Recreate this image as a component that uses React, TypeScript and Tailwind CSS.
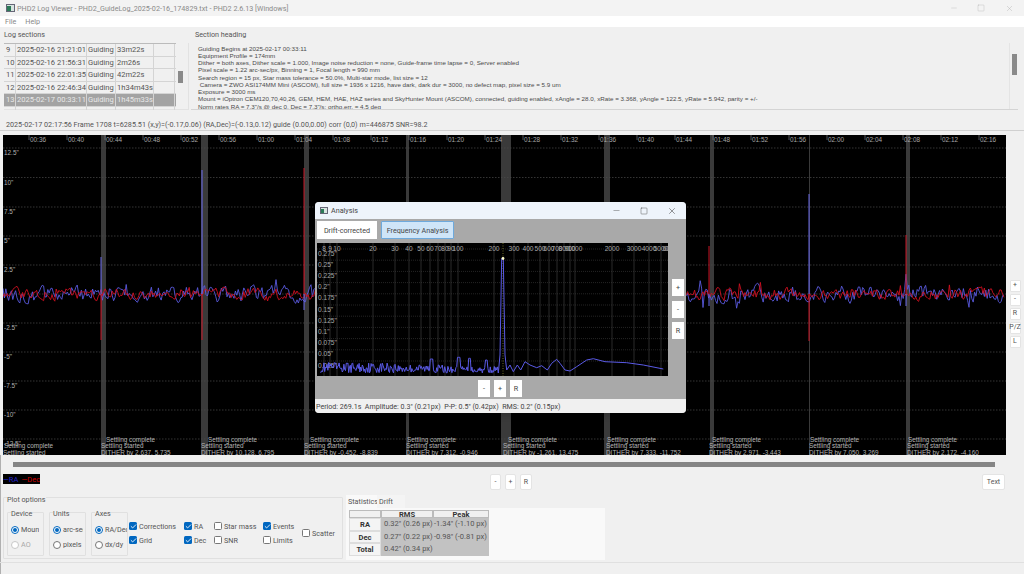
import React from "react";
import { Minus, Square, X, Check } from "lucide-react";

function rng(seed: number) {
  let s = seed;
  return () => {
    s = (s * 16807) % 2147483647;
    return (s - 1) / 2147483646;
  };
}

const X0 = 3, X1 = 1005, Y0 = 294;
type Spike = { x: number; blue?: number; red?: number };
const spikes: Spike[] = [
  { x: 101, blue: 257, red: 340 },
  { x: 202, blue: 170, red: 340 },
  { x: 304, red: 168, blue: 310 },
  { x: 406, blue: 220, red: 325 },
  { x: 503, red: 235, blue: 330 },
  { x: 606, blue: 245, red: 335 },
  { x: 709, red: 246, blue: 306 },
  { x: 809, blue: 194, red: 341 },
  { x: 906, red: 235, blue: 306 },
];

function series(seed: number, amp: number) {
  const r = rng(seed);
  let d = "";
  let prev = 0;
  for (let x = X0; x <= X1; x += 1.4) {
    prev = prev * 0.4 + (r() - 0.5) * amp;
    const y = Y0 + prev + (r() > 0.95 ? (r() - 0.6) * amp * 1.8 : 0);
    d += `${d ? "L" : "M"}${x.toFixed(1)} ${y.toFixed(1)} `;
  }
  return d;
}
const bluePath = series(12345, 14);
const redPath = series(98765, 10);

const hGrid = [148, 177.5, 207, 236, 265, 294, 323, 352, 381, 410, 439];
const hLabels = ['12.5"', '10"', '7.5"', '5"', '2.5"', "", '-2.5"', '-5"', '-7.5"', '-10"', '-12.5"'];
const times = Array.from({ length: 26 }, (_, k) => {
  const m = 36 + 4 * k;
  return `${String(Math.floor(m / 60)).padStart(2, "0")}:${String(m % 60).padStart(2, "0")}`;
});
const bands = [
  [101, 5], [201, 7], [304, 5], [406, 3], [501, 10], [604, 6], [710, 4], [809, 1], [906, 4],
];
const events = [
  [101, "2.637, 5.735", 106], [201, "10.128, 6.795", 208], [304, "-0.452, -8.839", 310], [406, "7.312, -0.946", 407],
  [503, "-1.261, 13.475", 508], [606, "7.333, -11.752", 607], [709, "2.971, -3.443", 712], [809, "7.050, 3.269", 810], [907, "2.172, -4.160", 908],
] as const;

function MainChart() {
  return (
    <svg width={1003} height={320} viewBox="3 135 1003 320" className="block bg-black" style={{ fontFamily: '"Liberation Sans", sans-serif' }}>
      {bands.map(([x, w]) => (
        <rect key={x} x={x} y={135} width={w} height={320} fill="#3a3a3a" />
      ))}
      {hGrid.map((y) => (
        <line key={y} x1={3} x2={1006} y1={y} y2={y} stroke="#4a4a4a" strokeWidth={0.7} strokeDasharray="1.5 1.5" />
      ))}
      {times.map((t, k) => (
        <g key={t}>
          <line x1={29 + 38 * k} x2={29 + 38 * k} y1={135} y2={140} stroke="#777" strokeWidth={0.7} />
          <text x={30 + 38 * k} y={141.5} fontSize={6.4} fill="#a8a8a8">{t}</text>
        </g>
      ))}
      {hLabels.map((l, i) => l && (
        <text key={l} x={4} y={hGrid[i] + 7} fontSize={6.4} fill="#b0b0b0">{l}</text>
      ))}
      <path d={bluePath} fill="none" stroke="#5a5ae0" strokeWidth={0.9} />
      <path d={redPath} fill="none" stroke="#d01020" strokeWidth={0.9} />
      {spikes.map((s) => (
        <g key={s.x} strokeWidth={0.6}>
          {s.blue !== undefined && <polyline points={`${s.x - 0.4},${Y0} ${s.x},${s.blue} ${s.x + 0.6},${Y0}`} fill="none" stroke="#6a6ae8" />}
          {s.red !== undefined && <polyline points={`${s.x - 0.4},${Y0} ${s.x},${s.red} ${s.x + 0.6},${Y0}`} fill="none" stroke="#c81828" />}
        </g>
      ))}
      {events.map(([x, v, cx]) => (
        <g key={x} fontSize={6.4} fill="#b4b4b4">
          <text x={cx} y={441.5}>Settling complete</text>
          <text x={x} y={448}>Settling started</text>
          <text x={x} y={454.5}>DITHER by {v}</text>
        </g>
      ))}
      <text x={4} y={448} fontSize={6.4} fill="#b4b4b4">Settling complete</text>
      <text x={3} y={454.5} fontSize={6.4} fill="#b4b4b4">Settling started</text>
    </svg>
  );
}

const specLabels: [string, number][] = [
  ["8", 324], ["9", 330], ["10", 337], ["20", 373], ["30", 395], ["40", 409], ["50", 421], ["60", 430], ["70", 438], ["80", 445], ["90", 451], ["100", 458],
  ["200", 494], ["300", 514], ["400", 528], ["500", 540], ["600", 549], ["700", 557], ["800", 564], ["900", 570], ["1000", 575], ["2000", 612], ["3000", 634], ["4000", 649], ["5000", 661], ["6000", 670],
];
const specTail: [number, number][] = [
  [580, 190], [585, 480], [590, 525], [600, 510], [610, 530], [622, 510], [632, 525], [645, 500], [660, 510], [680, 518], [695, 512], [712, 525],
  [725, 505], [740, 493], [750, 505], [765, 525], [780, 528], [800, 515], [830, 495], [850, 491], [885, 500], [950, 503], [1000, 510], [1060, 522],
];
function specPath() {
  const r = rng(777);
  let d = "";
  for (let zx = 32; zx < 566; zx += 2.4) {
    const amp = zx < 260 ? 32 : zx < 400 ? 26 : 20;
    let zy = 534 - r() * amp;
    if (zx > 360 && zx < 370) zy = 492;
    if (zx > 442 && zx < 450) zy = 487;
    if (zx > 475 && zx < 482) zy = 490;
    if (zx > 525 && zx < 532) zy = 495;
    d += `${d ? "L" : "M"}${(310 + zx / 3).toFixed(1)} ${(195 + zy / 3).toFixed(1)} `;
  }
  d += `L${310 + 570 / 3} ${195 + 480 / 3} L${310 + 575 / 3} ${195 + 190 / 3} `;
  for (const p of specTail) {
    d += `L${(310 + p[0] / 3).toFixed(1)} ${(195 + p[1] / 3).toFixed(1)} `;
  }
  return d;
}
const specYs = ['0.275"', '0.25"', '0.225"', '0.2"', '0.175"', '0.15"', '0.125"', '0.1"', '0.075"', '0.05"', '0.025"'];

function SpecChart() {
  return (
    <svg width={351} height={133} viewBox="317 243 351 133" className="block bg-black" style={{ fontFamily: '"Liberation Sans", sans-serif' }}>
      {specLabels.map(([l, x]) => (
        <line key={l} x1={x} x2={x} y1={243} y2={376} stroke="#3c3c3c" strokeWidth={0.7} />
      ))}
      {specYs.map((l, i) => (
        <line key={l} x1={317} x2={668} y1={249 + 11.2 * i} y2={249 + 11.2 * i} stroke="#3c3c3c" strokeWidth={0.6} strokeDasharray="1 1" />
      ))}
      {specLabels.map(([l, x]) => (
        <text key={l} x={x} y={251} fontSize={6.6} fill="#a8a8a8" textAnchor="middle">{l}</text>
      ))}
      {specYs.map((l, i) => (
        <text key={l} x={318} y={255.5 + 11.2 * i} fontSize={6.6} fill="#a8a8a8">{l}</text>
      ))}
      <line x1={503} x2={503} y1={243} y2={376} stroke="#8a8a30" strokeWidth={0.8} strokeDasharray="1 1.5" />
      <path d={specPath()} fill="none" stroke="#5a5ae6" strokeWidth={1} />
      <circle cx={503} cy={258.5} r={1.4} fill="#ffffcc" />
    </svg>
  );
}

function Btn({ children, className }: { children: React.ReactNode; className: string }) {
  return (
    <div className={`flex items-center justify-center bg-white text-[#555] rounded-[2px] border border-[#e4e4e4] ${className}`}>
      {children}
    </div>
  );
}

function Radio({ on, disabled, label, w }: { on?: boolean; disabled?: boolean; label: string; w: string }) {
  return (
    <div className="flex items-center h-[15px]">
      <div className={`w-[8px] h-[8px] rounded-full shrink-0 flex items-center justify-center border ${on ? "border-[#0067c0]" : disabled ? "border-[#c8c8c8]" : "border-[#777]"} bg-white`}>
        {on && <div className="w-[4px] h-[4px] rounded-full bg-[#0067c0]" />}
      </div>
      <div className={`ml-[2px] overflow-hidden whitespace-nowrap ${w} ${disabled ? "text-[#a8a8a8]" : "text-[#555]"}`}>{label}</div>
    </div>
  );
}

function Chk({ on, label }: { on?: boolean; label: string }) {
  return (
    <div className="flex items-center h-[14px] whitespace-nowrap">
      <div className={`w-[8px] h-[8px] rounded-[1.5px] shrink-0 flex items-center justify-center ${on ? "bg-[#0067c0]" : "bg-white border border-[#777]"}`}>
        {on && <Check size={7} strokeWidth={3} color="white" />}
      </div>
      <span className="ml-[2px] text-[#555]">{label}</span>
    </div>
  );
}

function SubGroup({ title, x, children }: { title: string; x: string; children: React.ReactNode }) {
  return (
    <div className={`relative border border-[#e0e0e0] rounded-[1px] h-[44px] pl-[3px] pt-[9px] ${x}`}>
      <div className="absolute left-[3px] top-[-4px] bg-[#f0f0f0] text-[#555] leading-[10px]">{title}</div>
      {children}
    </div>
  );
}

const rows: [string, string, string, string, boolean?][] = [
  ["9", "2025-02-16 21:21:01", "Guiding", "33m22s"],
  ["10", "2025-02-16 21:56:31", "Guiding", "2m26s"],
  ["11", "2025-02-16 22:01:35", "Guiding", "42m22s"],
  ["12", "2025-02-16 22:46:34", "Guiding", "1h34m43s"],
  ["13", "2025-02-17 00:33:11", "Guiding", "1h45m33s", true],
  ["14", "2025-02-17 02:20:56", "Guiding", "42m24s"],
];

const heading = [
  "Guiding Begins at 2025-02-17 00:33:11",
  "Equipment Profile = 174mm",
  "Dither = both axes, Dither scale = 1.000, Image noise reduction = none, Guide-frame time lapse = 0, Server enabled",
  "Pixel scale = 1.22 arc-sec/px, Binning = 1, Focal length = 990 mm",
  "Search region = 15 px, Star mass tolerance = 50.0%, Multi-star mode, list size = 12",
  " Camera = ZWO ASI174MM Mini (ASCOM), full size = 1936 x 1216, have dark, dark dur = 3000, no defect map, pixel size = 5.9 um",
  "Exposure = 3000 ms",
  "Mount = iOptron CEM120,70,40,26, GEM, HEM, HAE, HAZ series and SkyHunter Mount (ASCOM), connected, guiding enabled, xAngle = 28.0, xRate = 3.368, yAngle = 122.5, yRate = 5.942, parity = +/-",
  'Norm rates RA = 7.3"/s @ dec 0, Dec = 7.3"/s; ortho.err. = 4.5 deg',
];

const sans = { fontFamily: 'Roboto, "Noto Sans", sans-serif' };

export default function App() {
  return (
    <div className="relative w-[1024px] h-[574px] overflow-hidden bg-[#f0f0f0] text-[#555] text-[7.2px] leading-[11px] flex flex-col" style={sans}>
      {/* title bar */}
      <div className="h-[16px] shrink-0 flex items-center bg-[#f3f3f3] pl-[6px]">
        <div className="w-[9px] h-[8px] bg-[#d8e4e0] border border-[#667] flex items-end"><div className="w-[4px] h-[5px] bg-[#2c7a58]" /></div>
        <div className="ml-[2px] text-[#8a8a8a] whitespace-nowrap">PHD2 Log Viewer - PHD2_GuideLog_2025-02-16_174829.txt - PHD2 2.6.13 [Windows]</div>
        <div className="ml-auto flex items-center text-[#aaa]">
          <Minus size={8} strokeWidth={1} className="mr-[19px]" />
          <Square size={8} strokeWidth={1} className="mr-[19.5px]" />
          <X size={9} strokeWidth={1} className="mr-[10.5px]" />
        </div>
      </div>
      {/* menu */}
      <div className="h-[11px] shrink-0 bg-white flex items-center pl-[5px] gap-[9px] text-[#888]">
        <span>File</span><span>Help</span>
      </div>
      {/* top panels */}
      <div className="h-[87px] shrink-0 flex pl-[3px]">
        <div className="w-[186px] h-[87px] shrink-0 pt-[2px]">
          <div className="text-[#555] leading-[11px] pl-[1px]">Log sections</div>
          <div className="mt-[3px] h-[67px] border-r border-b border-[#e2e2e2] ml-[1px] pr-[1px] flex">
            <div className="w-[172px] border-t border-[#bbb] h-[67px] overflow-hidden shrink-0 text-[7.55px]">
              {rows.map((r) => (
                <div key={r[0]} className={`h-[12.5px] flex border-b border-[#d4d4d4] items-center ${r[4] ? "bg-[#a3a3a3] text-[#e8e8e8]" : "text-[#555]"}`}>
                  <div className="w-[12px] pl-[2px] border-r border-[#d4d4d4] h-full">{r[0]}</div>
                  <div className="w-[71px] pl-[1px] border-r border-[#d4d4d4] h-full whitespace-nowrap">{r[1]}</div>
                  <div className="w-[29px] pl-[1px] border-r border-[#d4d4d4] h-full">{r[2]}</div>
                  <div className="w-[38px] pl-[1px] border-r border-[#d4d4d4] h-full whitespace-nowrap">{r[3]}</div>
                  <div className="w-[21px] border-r border-[#d4d4d4] h-full" />
                </div>
              ))}
            </div>
            <div className="ml-[2px] mt-[28px] w-[5px] h-[12px] bg-[#8a8a8a]" />
          </div>
        </div>
        <div className="w-[827px] ml-[2px] shrink-0 pt-[2px]">
          <div className="text-[#555] leading-[11px] pl-[4px]">Section heading</div>
          <div className="mt-[3px] h-[67px] border-b border-[#d4d4d4] flex">
            <div className="flex-1 pl-[7px] pt-[1.5px] text-[6.25px] leading-[7.25px] text-[#4a4a4a] whitespace-pre overflow-hidden" style={{ fontFamily: '"Liberation Sans", sans-serif' }}>
              {heading.map((h) => <div key={h}>{h}</div>)}
            </div>
            <div className="w-[9px] border-l border-[#e4e4e4] pl-[2px] pt-[11px] shrink-0">
              <div className="w-[5px] h-[21px] bg-[#8a8a8a]" />
            </div>
          </div>
        </div>
      </div>
      {/* info line */}
      <div className="h-[13px] shrink-0 mt-[4px] border-b border-[#d0d0d0] pl-[6px] flex items-center text-[#555] whitespace-nowrap">
        2025-02-17 02:17:56 Frame 1708 t=6285.51 (x,y)=(-0.17,0.06) (RA,Dec)=(-0.13,0.12) guide (0.00,0.00) corr (0,0) m=446875 SNR=98.2
      </div>
      <div className="h-[4px] shrink-0" />
      {/* chart */}
      <div className="h-[320px] shrink-0 flex pl-[3px]">
        <div className="w-[1003px] shrink-0 overflow-hidden"><MainChart /></div>
        <div className="w-[18px] pt-[145px] flex flex-col items-center gap-[2.5px] text-[7px]">
          {["+", "-", "R", "P/Z", "L"].map((l) => (
            <div key={l} className="w-[11px] h-[11.5px] bg-white border border-[#e4e4e4] rounded-[1px] flex items-center justify-center text-[#555] whitespace-nowrap">{l}</div>
          ))}
        </div>
      </div>
      <div className="flex-1 flex flex-col shadow-[inset_1px_0_0_#b0b0b0]">
        {/* scrollbar */}
        <div className="h-[19px] shrink-0 pl-[13px] pt-[7px]">
          <div className="w-[982px] h-[5px] bg-[#858585]" />
        </div>
        {/* controls row */}
        <div className="h-[18px] shrink-0 flex items-start pl-[3px]">
          <div className="w-[37px] h-[10px] bg-black flex items-center overflow-hidden whitespace-nowrap text-[7.5px]">
            <span className="text-[#2222cc]">—RA</span><span className="text-[#cc0000] ml-[3px]">—Dec</span>
          </div>
          <div className="ml-[450px] flex gap-[4px] text-[7px]">
            <Btn className="w-[11px] h-[16px]">-</Btn>
            <Btn className="w-[11px] h-[16px]">+</Btn>
            <Btn className="w-[12px] h-[16px]">R</Btn>
          </div>
          <Btn className="ml-auto mr-[19px] w-[23px] h-[16px] text-[7px]">Text</Btn>
        </div>
        {/* bottom */}
        <div className="h-[71px] shrink-0 flex pl-[3px] pt-[5px] border-b border-[#e0e0e0]">
          <div className="relative w-[340px] h-[62px] border border-[#e0e0e0] rounded-[1px] flex pl-[3px] pt-[14px] shrink-0">
            <div className="absolute left-[3px] top-[-3px] bg-[#f0f0f0] leading-[10px]">Plot options</div>
            <SubGroup title="Device" x="w-[37px]">
              <Radio on label="Mount" w="w-[18px]" />
              <Radio disabled label="AO" w="w-[18px]" />
            </SubGroup>
            <SubGroup title="Units" x="w-[37px] ml-[5px]">
              <Radio on label="arc-sec" w="w-[20px]" />
              <Radio label="pixels" w="w-[20px]" />
            </SubGroup>
            <SubGroup title="Axes" x="w-[37px] ml-[5px]">
              <Radio on label="RA/Dec" w="w-[22px]" />
              <Radio label="dx/dy" w="w-[22px]" />
            </SubGroup>
            <div className="ml-[1px] w-[55px] pt-[7px]"><Chk on label="Corrections" /><Chk on label="Grid" /></div>
            <div className="w-[30px] pt-[7px]"><Chk on label="RA" /><Chk on label="Dec" /></div>
            <div className="w-[49px] pt-[7px]"><Chk label="Star mass" /><Chk label="SNR" /></div>
            <div className="w-[39px] pt-[7px]"><Chk on label="Events" /><Chk label="Limits" /></div>
            <div className="pt-[14px]"><Chk label="Scatter" /></div>
          </div>
          <div className="ml-[3px] w-[259px] shrink-0 mt-[-2px]">
            <div className="flex h-[13px] leading-[14px]">
              <div className="w-[31px] h-full bg-[#f9f9f9] pl-[2px]">Statistics</div>
              <div className="w-[28px] h-full bg-[#f4f4f4] pl-[2px]">Drift</div>
            </div>
            <div className="h-[52px] bg-[#f9f9f9] pl-[3px] pt-[2px]">
              <div className="w-[140px] grid grid-cols-[32px_52px_56px] grid-rows-[8px_12.5px_12.5px_12.5px] leading-[12px] text-[7.55px] text-[#555]">
                <div className="bg-[#f0f0f0] border border-[#bbb]" />
                <div className="bg-[#f0f0f0] border border-[#bbb] font-bold text-center leading-[7px] text-[#333]">RMS</div>
                <div className="bg-[#f0f0f0] border border-[#bbb] font-bold text-center leading-[7px] text-[#333]">Peak</div>
                <div className="bg-[#f4f4f4] border border-[#ddd] font-bold text-center text-[#333]">RA</div>
                <div className="bg-[#c2c2c2] pl-[3px] whitespace-nowrap">0.32" (0.26 px)</div>
                <div className="bg-[#c2c2c2] pl-[1px] whitespace-nowrap">-1.34" (-1.10 px)</div>
                <div className="bg-[#f4f4f4] border border-[#ddd] font-bold text-center text-[#333]">Dec</div>
                <div className="bg-[#c2c2c2] pl-[3px] whitespace-nowrap">0.27" (0.22 px)</div>
                <div className="bg-[#c2c2c2] pl-[1px] whitespace-nowrap">-0.98" (-0.81 px)</div>
                <div className="bg-[#f4f4f4] border border-[#ddd] font-bold text-center text-[#333]">Total</div>
                <div className="bg-[#c2c2c2] pl-[3px] whitespace-nowrap">0.42" (0.34 px)</div>
                <div className="bg-[#c2c2c2]" />
              </div>
            </div>
          </div>
        </div>
      </div>

      {/* floating Analysis window */}
      <div className="absolute left-[315px] top-[202px] w-[371px] h-[211px] rounded-[4px] overflow-hidden bg-[#a9a9a9] flex flex-col shadow-md text-[#444]">
        <div className="h-[17px] shrink-0 bg-[#eef4fb] flex items-center pl-[5px]">
          <div className="w-[8px] h-[7px] bg-[#d8e4e0] border border-[#667] flex items-end"><div className="w-[3px] h-[4px] bg-[#2c7a58]" /></div>
          <span className="ml-[3px]">Analysis</span>
          <div className="ml-auto flex items-center text-[#333]">
            <Minus size={9} strokeWidth={1} className="mr-[19px]" />
            <Square size={8} strokeWidth={1.2} className="mr-[19px]" />
            <X size={10} strokeWidth={1.2} className="mr-[9px]" />
          </div>
        </div>
        <div className="h-[24px] shrink-0 flex pl-[2px] pt-[2px] gap-[4px] whitespace-nowrap">
          <div className="w-[60px] h-[18px] bg-white flex items-center justify-center">Drift-corrected</div>
          <div className="w-[73px] h-[18px] bg-[#cfe5f8] border border-[#6ea9dc] rounded-[1px] flex items-center justify-center">Frequency Analysis</div>
        </div>
        <div className="h-[137px] shrink-0 flex pl-[2px]">
          <div className="w-[351px] h-[133px] shrink-0"><SpecChart /></div>
          <div className="ml-[4px] pt-[36px] flex flex-col gap-[4.5px]">
            <div className="w-[12px] h-[17px] bg-white flex items-center justify-center">+</div>
            <div className="w-[12px] h-[17px] bg-white flex items-center justify-center">-</div>
            <div className="w-[12px] h-[17px] bg-white flex items-center justify-center">R</div>
          </div>
        </div>
        <div className="h-[19px] shrink-0 flex justify-center gap-[4px] pr-[1px]">
          <div className="w-[12px] h-[17px] bg-white flex items-center justify-center">-</div>
          <div className="w-[12px] h-[17px] bg-white flex items-center justify-center">+</div>
          <div className="w-[12px] h-[17px] bg-white flex items-center justify-center">R</div>
        </div>
        <div className="flex-1 bg-[#f0f0f0] flex items-center pl-[1px] whitespace-pre text-[7.1px]">
          Period: 269.1s  Amplitude: 0.3" (0.21px)  P-P: 0.5" (0.42px)  RMS: 0.2" (0.15px)
        </div>
      </div>
    </div>
  );
}
